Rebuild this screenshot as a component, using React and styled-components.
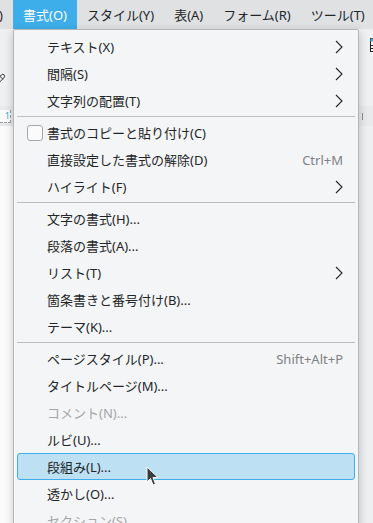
import styled, { createGlobalStyle } from "styled-components";
import { Pencil } from "lucide-react";

const GlobalStyle = createGlobalStyle`
  html, body { margin: 0; padding: 0; overflow: hidden; }
  body {
    width: 373px;
    height: 523px;
    background: #eff0f1;
    font-family: "Noto Sans", "Noto Sans CJK JP", sans-serif;
    color: #232629;
  }
`;

const barItems = ["スタイル(Y)", "表(A)", "フォーム(R)", "ツール(T)"];

const menu = [
  { label: "テキスト(X)", arrow: true },
  { label: "間隔(S)", arrow: true },
  { label: "文字列の配置(T)", arrow: true },
  { sep: true },
  { label: "書式のコピーと貼り付け(C)", check: true },
  { label: "直接設定した書式の解除(D)", shortcut: "Ctrl+M" },
  { label: "ハイライト(F)", arrow: true },
  { sep: true },
  { label: "文字の書式(H)..." },
  { label: "段落の書式(A)..." },
  { label: "リスト(T)", arrow: true },
  { label: "箇条書きと番号付け(B)..." },
  { label: "テーマ(K)..." },
  { sep: true },
  { label: "ページスタイル(P)...", shortcut: "Shift+Alt+P" },
  { label: "タイトルページ(M)..." },
  { label: "コメント(N)...", disabled: true },
  { label: "ルビ(U)..." },
  { label: "段組み(L)...", active: true },
  { label: "透かし(O)..." },
  { label: "セクション(S)...", disabled: true },
];

export default function App() {
  return (
    <Page>
      <GlobalStyle />
      <MenuBar>
        <Clip>
          <BarItem>表示(V)</BarItem>
        </Clip>
        <BarItem $open>書式(O)</BarItem>
        {barItems.map((b) => (
          <BarItem key={b}>{b}</BarItem>
        ))}
      </MenuBar>

      <Toolbar>
        <LeftTool>
          <Pencil size={16} strokeWidth={1.4} />
        </LeftTool>
        <TableIcon viewBox="0 0 14 14">
          <rect x="0.5" y="0.5" width="13" height="13" fill="#fcfcfc" stroke="#232629" />
          <rect x="0.5" y="0.5" width="13" height="3" fill="#3daee9" />
          <path d="M0.5 7.5h13M0.5 10.5h13M5.5 3.5v10M9.5 3.5v10" stroke="#232629" fill="none" />
        </TableIcon>
      </Toolbar>
      <Ruler>
        <RulerLeft>1</RulerLeft>
        <RulerMark />
      </Ruler>
      <Workspace>
        <DocPage />
      </Workspace>

      <Dropdown>
        {menu.map((m, i) =>
          m.sep ? (
            <Separator key={i} />
          ) : (
            <Item key={i} $active={m.active} $disabled={m.disabled}>
              <IconCol>{m.check && <CheckBox />}</IconCol>
              <Label>{m.label}</Label>
              {m.shortcut && <Shortcut>{m.shortcut}</Shortcut>}
              {m.arrow && (
                <Chevron viewBox="0 0 8 14">
                  <polyline points="1,1 7,7 1,13" fill="none" stroke="#232629" strokeWidth="1.1" />
                </Chevron>
              )}
            </Item>
          )
        )}
      </Dropdown>

      <Cursor viewBox="0 0 13 21">
        <path d="M1 1 L1 16 L4.5 12.5 L7 19 L9.5 18 L7 11.5 L12 11.5 Z" fill="#3b3e41" stroke="#fcfcfc" strokeWidth="1" strokeLinejoin="round" />
      </Cursor>
    </Page>
  );
}

const Page = styled.div`
  position: relative;
  width: 373px;
  height: 523px;
  overflow: hidden;
  display: flex;
  flex-direction: column;
`;

const MenuBar = styled.div`
  height: 29px;
  background: #dfe1e3;
  display: flex;
  flex-shrink: 0;
`;

const Clip = styled.div`
  width: 13px;
  display: flex;
  justify-content: flex-end;
  overflow: hidden;
  flex-shrink: 0;
`;

const BarItem = styled.div`
  display: flex;
  align-items: center;
  padding: 0 10px 0 10px;
  font-size: 13px;
  white-space: nowrap;
  flex-shrink: 0;
  background: ${(p) => (p.$open ? "#3daee9" : "transparent")};
  color: ${(p) => (p.$open ? "#fcfcfc" : "#232629")};
`;

const Toolbar = styled.div`
  height: 77px;
  background: #eff0f1;
  display: flex;
  justify-content: space-between;
  align-items: flex-start;
  flex-shrink: 0;
`;

const LeftTool = styled.div`
  margin: 44px 0 0 -10px;
  color: #232629;
  display: flex;
`;

const TableIcon = styled.svg`
  width: 14px;
  height: 14px;
  margin: 9px -11px 0 0;
`;

const Ruler = styled.div`
  height: 20px;
  background: #e9eaeb;
  display: flex;
  justify-content: space-between;
  align-items: center;
  flex-shrink: 0;
`;

const RulerLeft = styled.div`
  width: 10px;
  height: 12px;
  background: #fcfcfc;
  border-right: 1px dashed #9a9c9e;
  border-bottom: 1px dashed #9a9c9e;
  font-size: 9px;
  line-height: 12px;
  color: #3daee9;
  text-align: right;
`;

const RulerMark = styled.div`
  width: 1px;
  height: 7px;
  background: #8a8c8e;
  margin-right: 10px;
`;

const Workspace = styled.div`
  flex: 1;
  display: flex;
  background: #eeeff0;
`;

const DocPage = styled.div`
  width: 200px;
  background: #fcfcfc;
`;

const Dropdown = styled.div`
  position: absolute;
  left: 13px;
  top: 29px;
  width: 346px;
  box-sizing: border-box;
  background: #f4f5f6;
  border: 1px solid #b4b6b8;
  border-radius: 2px;
  padding: 3px 3px;
  box-shadow: 0 3px 10px rgba(0, 0, 0, 0.22);
`;

const Item = styled.div`
  height: 27px;
  box-sizing: border-box;
  display: flex;
  align-items: center;
  padding-right: 11px;
  font-size: 13px;
  white-space: nowrap;
  border-radius: 3px;
  color: ${(p) => (p.$disabled ? "#a4a6a8" : "#232629")};
  background: ${(p) => (p.$active ? "#bde0f3" : "transparent")};
  border: 1px solid ${(p) => (p.$active ? "#3daee9" : "transparent")};
`;

const IconCol = styled.div`
  width: 29px;
  flex-shrink: 0;
  display: flex;
  justify-content: flex-end;
  padding-right: 4px;
  box-sizing: border-box;
`;

const CheckBox = styled.div`
  width: 16px;
  height: 16px;
  box-sizing: border-box;
  border: 1px solid #a6a8aa;
  border-radius: 3px;
  background: #fbfbfb;
`;

const Label = styled.span`
  flex: 1;
`;

const Shortcut = styled.span`
  color: #7f8285;
`;

const Chevron = styled.svg`
  width: 8px;
  height: 14px;
`;

const Separator = styled.div`
  height: 5px;
  display: flex;
  align-items: center;
  &::before {
    content: "";
    flex: 1;
    height: 1px;
    background: #bcbec0;
  }
`;

const Cursor = styled.svg`
  position: absolute;
  left: 146px;
  top: 466px;
  width: 13px;
  height: 21px;
`;
